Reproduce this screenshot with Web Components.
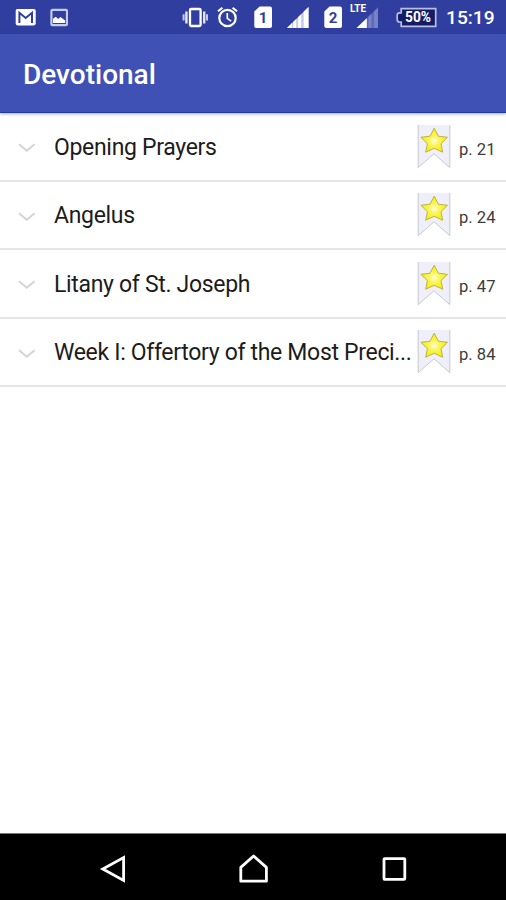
<!DOCTYPE html>
<html lang="en">
<head>
<meta charset="utf-8">
<title>Devotional</title>
<style>
  body {
    margin: 0;
    font-family: Roboto, "Liberation Sans", sans-serif;
    background: #fff;
  }
</style>
</head>
<body>
<devotional-app></devotional-app>

<script>
class StatusBar extends HTMLElement {
  constructor() {
    super();
    this.attachShadow({mode: 'open'}).innerHTML = `
      <style>
        :host {
          display: flex;
          align-items: center;
          box-sizing: border-box;
          height: 34px;
          padding: 0 11px 0 15px;
          background: #303f9f;
          color: #fff;
        }
        svg {
          display: block;
          flex: none;
          height: 34px;
        }
        .space { flex: 1; }
        .picture { margin-left: 14px; }
        .alarm { margin-left: 8px; }
        .sim { margin-left: 15px; }
        .alarm + .sim { margin-left: 16px; }
        .signal { margin-left: 15px; }
        .lte { margin-left: 7px; }
        .battery { margin-left: 16px; }
        text { font-family: Roboto, sans-serif; font-weight: 700; }
        time {
          flex: none;
          width: 49px;
          margin-left: 9px;
          padding-top: 2px;
          font-size: 19.2px;
          font-weight: 500;
          line-height: 24px;
          white-space: nowrap;
        }
      </style>
      <!-- mail -->
      <svg width="21" viewBox="0 0 21 34">
        <rect x=".7" y="9" width="20" height="16.4" rx="1.8" fill="#fff"/>
        <path d="M4.4 23V12.8l6.3 5.2 6.3-5.2V23" fill="none" stroke="#303f9f" stroke-width="2"/>
      </svg>
      <!-- picture -->
      <svg class="picture" width="18" viewBox="0 0 18 34">
        <rect x="1.4" y="9.8" width="15.6" height="15.4" rx="1.2" fill="none" stroke="#c5caec" stroke-width="2.2"/>
        <path d="M3 23v-4.2l2.8-2 2.3 2.2 2.4-2 4.7 3.6V23z" fill="#fff"/>
      </svg>
      <div class="space"></div>
      <!-- vibrate -->
      <svg width="27" viewBox="0 0 27 34" fill="none" stroke="#fff">
        <rect x="8" y="9" width="10.6" height="17" rx="1.2" stroke-width="2.3"/>
        <path d="M4.4 11.5v12M22.2 11.5v12" stroke="#e3e6f5" stroke-width="2.4"/>
        <path d="M1.6 14.2v6.4M25 14.2v6.4" stroke="#c5caec" stroke-width="2"/>
      </svg>
      <!-- alarm -->
      <svg class="alarm" width="21" viewBox="0 0 21 34" fill="none" stroke="#fff">
        <circle cx="10.5" cy="18" r="8.2" stroke-width="2.2"/>
        <path d="M10.3 13v5.4l3.8 2.7" stroke-width="1.7"/>
        <path d="M1 11.2l4.4-3.5M20 11.2l-4.4-3.5" stroke-width="2.1"/>
      </svg>
      <!-- first sim -->
      <svg class="sim" width="18" viewBox="0 0 18 34">
        <path d="M5.6 6.4H16q2 0 2 2V26q0 2-2 2H2.3q-2 0-2-2V11.5z" fill="#fff"/>
        <text x="9.1" y="23" font-size="15" text-anchor="middle" fill="#303f9f">1</text>
      </svg>
      <svg class="signal" width="22" viewBox="0 0 22 34">
        <path d="M0 28L21.5 7v21z" fill="#c5caec"/>
        <path d="M0 28l5-4.9V28zM6.2 28v-6.1l3-2.9v9zM11.2 28V17.1l3-2.9V28zM16.7 28V11.7L21.5 7v21z" fill="#fff"/>
      </svg>
      <!-- second sim -->
      <svg class="sim" width="18" viewBox="0 0 18 34">
        <path d="M5.6 6.4H16q2 0 2 2V26q0 2-2 2H2.3q-2 0-2-2V11.5z" fill="#fff"/>
        <text x="9.1" y="23" font-size="15" text-anchor="middle" fill="#303f9f">2</text>
      </svg>
      <svg class="lte" width="31" viewBox="0 0 31 34">
        <text x="1" y="12.2" font-size="10" textLength="16" lengthAdjust="spacingAndGlyphs" fill="#fff">LTE</text>
        <path d="M7.5 28L29 7.5V28z" fill="#5c69b8"/>
        <path d="M19.4 28V16.7l3-2.8V28zM25 28V11.4l4-3.9V28z" fill="#7782c6"/>
        <path d="M7.5 28l10.3-9.8V28z" fill="#fff"/>
      </svg>
      <!-- battery -->
      <svg class="battery" width="41" viewBox="0 0 41 34">
        <path d="M5.2 8.6H39.7V26.3H5.2V22H3.6Q1.2 22 1.2 19.5V15.2Q1.2 12.8 3.6 12.8H5.2z" fill="#151c66" stroke="#b9bfe3" stroke-width="1.7"/>
        <text x="22" y="22.3" font-size="14" text-anchor="middle" textLength="26" lengthAdjust="spacingAndGlyphs" fill="#fff">50%</text>
      </svg>
      <time>15:19</time>`;
  }
}
customElements.define('status-bar', StatusBar);

class AppToolbar extends HTMLElement {
  constructor() {
    super();
    this.attachShadow({mode: 'open'}).innerHTML = `
      <style>
        :host {
          display: flex;
          align-items: center;
          box-sizing: border-box;
          height: 79px;
          padding: 3px 23px 0;
          background: #3f51b5;
          border-bottom: 1px solid #1c3ba8;
          box-shadow: 0 1px 3px rgba(0, 0, 0, .35);
          color: #fff;
          font-size: 28px;
          font-weight: 500;
          z-index: 1;
        }
      </style>
      <slot></slot>`;
  }
}
customElements.define('app-toolbar', AppToolbar);

class StarBookmark extends HTMLElement {
  constructor() {
    super();
    this.attachShadow({mode: 'open'}).innerHTML = `
      <style>
        :host { display: block; flex: none; }
        svg { display: block; }
      </style>
      <svg width="34" height="45" viewBox="0 0 34 45">
        <defs>
          <radialGradient id="gold" cx=".5" cy=".52" r=".5">
            <stop offset="0" stop-color="#fffde0"/>
            <stop offset=".4" stop-color="#faf55a"/>
            <stop offset="1" stop-color="#f5ee00"/>
          </radialGradient>
        </defs>
        <path d="M1.2 1H32.8V43.6L17 29.8 1.2 43.6z" fill="#eeeff8"/>
        <path d="M1.2 1V43.6L17 29.8 32.8 43.6V1" fill="none" stroke="#c9c9d2"/>
        <path d="M17.2 4.2l4.2 8 9.1 1.1-6.5 6.4 1.7 8.5-8.5-3.9-8.5 3.9 1.7-8.5-6.5-6.4 9.1-1.1z" fill="url(#gold)" stroke="#b5ab40" stroke-width=".9" stroke-linejoin="round"/>
      </svg>`;
  }
}
customElements.define('star-bookmark', StarBookmark);

class PrayerRow extends HTMLElement {
  constructor() {
    super();
    this.attachShadow({mode: 'open'}).innerHTML = `
      <style>
        :host {
          display: flex;
          align-items: center;
          box-sizing: border-box;
          height: 68.5px;
          padding-left: 18px;
          border-bottom: 2px solid #e6e6e6;
        }
        .arrow { flex: none; margin: 4px 18px 0 0; }
        .title {
          flex: none;
          width: 363px;
          padding-top: 3px;
          white-space: nowrap;
          color: #1c1c1c;
          font-size: 23px;
          letter-spacing: -.32px;
          line-height: 32px;
        }
        .page {
          margin-left: 8px;
          padding-top: 6px;
          color: #3c3c3c;
          font-size: 16.6px;
          white-space: nowrap;
        }
      </style>
      <svg class="arrow" width="18" height="10" viewBox="0 0 18 10">
        <path d="M1 1.2l7.8 6.6 7.8-6.6" fill="none" stroke="#d4d4d4" stroke-width="2"/>
      </svg>
      <div class="title"><slot></slot></div>
      <star-bookmark></star-bookmark>
      <div class="page">p. ${this.getAttribute('page')}</div>`;
  }
}
customElements.define('prayer-row', PrayerRow);

class NavigationBar extends HTMLElement {
  constructor() {
    super();
    this.attachShadow({mode: 'open'}).innerHTML = `
      <style>
        :host {
          display: flex;
          align-items: center;
          justify-content: space-between;
          box-sizing: border-box;
          height: 67px;
          padding: 4px 97px 0 99px;
          background: #000;
          border-top: 1px solid #777;
        }
        svg { display: block; fill: none; stroke: #fff; stroke-width: 2.8; }
      </style>
      <svg width="30" height="30" viewBox="0 0 30 30"><path d="M24.6 3.6v22.8L3.8 15z"/></svg>
      <svg width="30" height="30" viewBox="0 0 30 30"><path d="M1.8 27.2V13.4L14.6 2l12.8 11.4v13.8z" stroke-linejoin="round"/></svg>
      <svg width="30" height="30" viewBox="0 0 30 30"><rect x="5" y="4.6" width="20.8" height="20.8" rx=".8"/></svg>`;
  }
}
customElements.define('navigation-bar', NavigationBar);

class DevotionalApp extends HTMLElement {
  constructor() {
    super();
    this.attachShadow({mode: 'open'}).innerHTML = `
      <style>
        :host {
          display: flex;
          flex-direction: column;
          height: 900px;
          overflow: hidden;
        }
        status-bar, app-toolbar, navigation-bar { flex: none; }
        main { flex: 1; }
      </style>
      <status-bar></status-bar>
      <app-toolbar>Devotional</app-toolbar>
      <main>
        <prayer-row page="21">Opening Prayers</prayer-row>
        <prayer-row page="24">Angelus</prayer-row>
        <prayer-row page="47">Litany of St. Joseph</prayer-row>
        <prayer-row page="84">Week I: Offertory of the Most Preci...</prayer-row>
      </main>
      <navigation-bar></navigation-bar>`;
  }
}
customElements.define('devotional-app', DevotionalApp);
</script>
</body>
</html>
